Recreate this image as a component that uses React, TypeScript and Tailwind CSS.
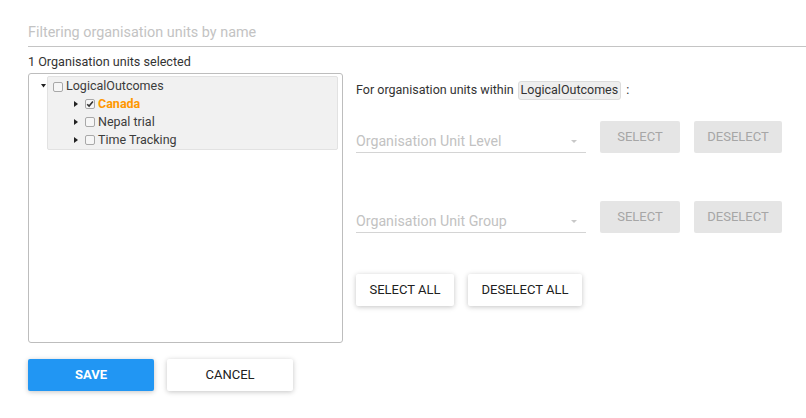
import React from 'react';

const font = { fontFamily: 'Roboto, "Liberation Sans", sans-serif' };

function Arrow({ down }: { down?: boolean }) {
  return down ? (
    <svg width="5" height="4" viewBox="0 0 5 4" className="block">
      <path d="M0 0H5L2.5 3.5Z" fill="#222" />
    </svg>
  ) : (
    <svg width="4" height="6" viewBox="0 0 4 6" className="block">
      <path d="M0 0L4 3L0 6Z" fill="#222" />
    </svg>
  );
}

function Box({ checked }: { checked?: boolean }) {
  return (
    <span className="relative flex h-[10px] w-[10px] shrink-0 items-center justify-center rounded-[2px] border border-[#a8a8a8] bg-[#f6f6f6]">
      {checked && (
        <svg width="8" height="8" viewBox="0 0 8 8" className="block">
          <path d="M1.2 4.2L3.1 6.1L6.9 1.6" fill="none" stroke="#333" strokeWidth="1.6" />
        </svg>
      )}
    </span>
  );
}

const children = [
  { name: 'Canada', checked: true },
  { name: 'Nepal trial' },
  { name: 'Time Tracking' },
];

function Btn({ label, disabled, primary, w }: { label: string; disabled?: boolean; primary?: boolean; w: string }) {
  const cls = disabled
    ? 'bg-[#e5e5e5] text-[#a6a6a6] font-normal'
    : primary
    ? 'bg-[#2196f3] text-white font-bold shadow-[0_1px_6px_rgba(0,0,0,0.12),0_1px_4px_rgba(0,0,0,0.12)]'
    : 'bg-white text-[#212121] font-normal shadow-[0_1px_6px_rgba(0,0,0,0.12),0_1px_4px_rgba(0,0,0,0.12)]';
  return (
    <div className={`flex h-[32px] ${w} shrink-0 items-center justify-center rounded-[2px] text-[13px] uppercase ${cls}`}>
      {label}
    </div>
  );
}

function Field({ label }: { label: string }) {
  return (
    <div className="flex h-[32px] w-[230px] items-center border-b border-[#d4d4d4] pt-[10px] text-[14.2px] text-[#c2c2c2]">
      <span className="flex-1">{label}</span>
      <svg width="6" height="3" viewBox="0 0 6 3" className="mr-[9px] block">
        <path d="M0 0H6L3 3Z" fill="#c8c8c8" />
      </svg>
    </div>
  );
}

export default function App() {
  return (
    <div className="h-[418px] w-[806px] overflow-hidden bg-white pl-[28px]" style={font}>
      <div className="flex h-[47px] items-end border-b border-[#c4c4c4] pb-[4px] text-[14.4px] leading-[18px] text-[#c3c3c3]">
        Filtering organisation units by name
      </div>
      <div className="mt-[7px] text-[12.6px] leading-[16px] text-[#333]">1 Organisation units selected</div>

      <div className="mt-[3px] flex">
        <div className="h-[270px] w-[315px] shrink-0 rounded-[3px] border border-[#bdbdbd]">
          <div className="flex pr-[4px] pt-[2px]">
            <div className="w-[18px] shrink-0 pl-[12px] pt-[8px]">
              <Arrow down />
            </div>
            <div className="flex-1 rounded-[2px] border border-[#e2e2e2] bg-[#f1f1f1] text-[12.5px] text-[#3c3c3c]">
              <div className="flex h-[18px] items-center pl-[5px] pt-[1px]">
                <Box />
                <span className="ml-[3px]">LogicalOutcomes</span>
              </div>
              {children.map((c) => (
                <div key={c.name} className="flex h-[18px] items-center pl-[26px]">
                  <Arrow />
                  <span className="ml-[7px]">
                    <Box checked={c.checked} />
                  </span>
                  <span className={`ml-[3px] ${c.checked ? 'font-bold text-[#ff9800]' : ''}`}>{c.name}</span>
                </div>
              ))}
            </div>
          </div>
        </div>

        <div className="ml-[13px] flex flex-col">
          <div className="mt-[8px] flex h-[19px] items-center text-[12.5px] text-[#333]">
            <span>For organisation units within</span>
            <span className="ml-[4px] flex h-[19px] items-center rounded-[3px] border border-[#dcdcdc] bg-[#eeeeee] px-[2px]">
              LogicalOutcomes
            </span>
            <span className="ml-[5px]">:</span>
          </div>

          <div className="mt-[21px] flex items-end gap-[14px]">
            <Field label="Organisation Unit Level" />
            <Btn label="Select" disabled w="w-[80px]" />
            <Btn label="Deselect" disabled w="w-[88px]" />
          </div>

          <div className="mt-[48px] flex items-end gap-[14px]">
            <Field label="Organisation Unit Group" />
            <Btn label="Select" disabled w="w-[80px]" />
            <Btn label="Deselect" disabled w="w-[88px]" />
          </div>

          <div className="mt-[41px] flex gap-[14px]">
            <Btn label="Select all" w="w-[98px]" />
            <Btn label="Deselect all" w="w-[114px]" />
          </div>
        </div>
      </div>

      <div className="mt-[16px] flex gap-[13px]">
        <Btn label="Save" primary w="w-[126px]" />
        <Btn label="Cancel" w="w-[126px]" />
      </div>
    </div>
  );
}
